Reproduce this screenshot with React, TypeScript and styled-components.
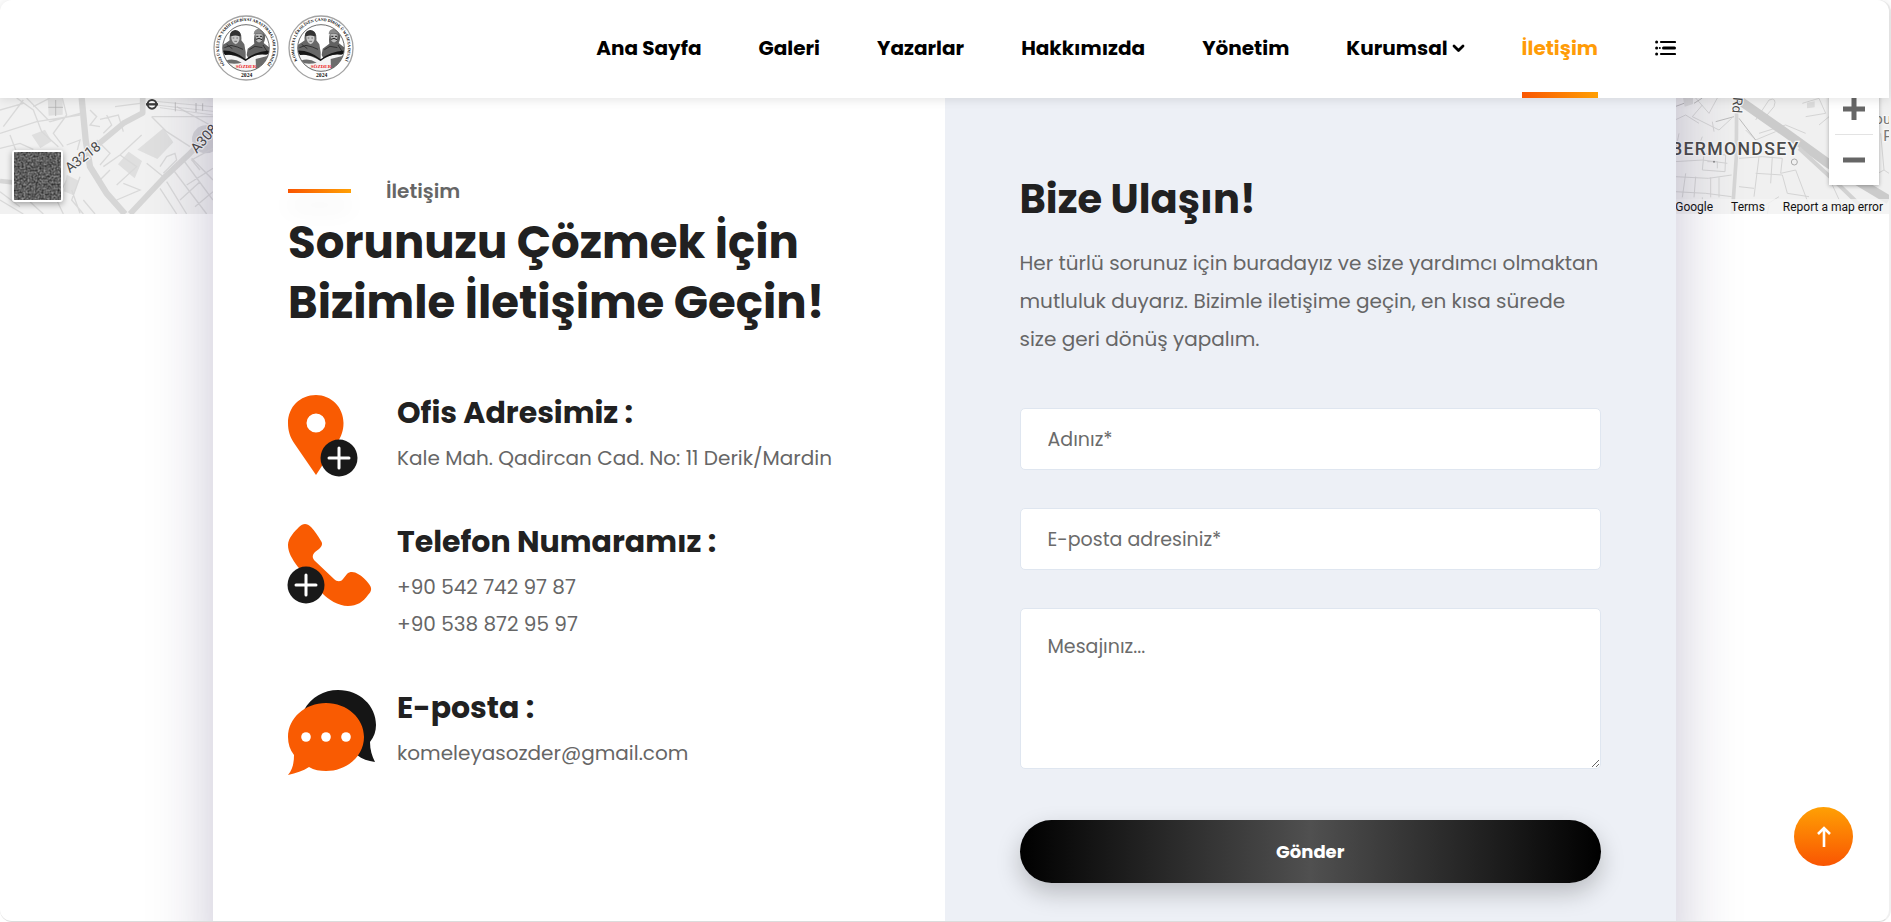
import React from "react";
import styled, { createGlobalStyle } from "styled-components";

const GlobalStyle = createGlobalStyle`
  *, *::before, *::after { box-sizing: border-box; }
  body {
    margin: 0;
    background: #fff;
    color: #666;
    font-family: Poppins, Inter, "Liberation Sans", sans-serif;
  }
  h1, h2, h3, p { margin: 0; }
  a { color: inherit; text-decoration: none; }
`;

const flame = "linear-gradient(90deg, #f95502, #ffa004)";

const Page = styled.div`
  display: flex;
  flex-direction: column;
  min-height: 100vh;
  border-right: 2px solid #f0f0f0;
  border-bottom: 1px solid #dcdcdc;
  border-radius: 12px;
`;

const Header = styled.header`
  position: sticky;
  top: 0;
  z-index: 10;
  background: #fff;
  border-radius: 12px 12px 0 0;
  box-shadow: 0 1px 12px rgba(0, 0, 0, 0.12);
`;

const HeaderInner = styled.div`
  display: flex;
  align-items: center;
  justify-content: space-between;
  width: 100%;
  max-width: 1463px;
  height: 98px;
  margin: 0 auto;
`;

const Logos = styled.a`
  display: flex;
  gap: 9px;
  margin-top: -3px;
`;

const Nav = styled.nav`
  display: flex;
  align-items: stretch;
  gap: 57px;
  height: 100%;
`;

const NavLink = styled.a<{ $active?: boolean }>`
  display: flex;
  align-items: center;
  gap: 4px;
  padding: 8px 0 4px;
  border-bottom: 6px solid transparent;
  border-image: ${(p) => (p.$active ? `${flame} 1` : "none")};
  color: ${(p) => (p.$active ? "#ff9c07" : "#000")};
  font-size: 20px;
  font-weight: 700;
  white-space: nowrap;
`;

const MenuButton = styled.button`
  display: flex;
  align-items: center;
  padding: 0 0 3px;
  border: 0;
  background: none;
  color: #000;
`;

const Stage = styled.main`
  display: grid;
  flex: 1;
  grid-template-columns: minmax(0, 1fr);
  overflow: hidden;
`;

const MapStrip = styled.section`
  position: relative;
  grid-area: 1 / 1;
  display: flex;
  justify-content: space-between;
  height: 116px;
  background: #f1f1f1;
`;

const Satellite = styled.button`
  position: absolute;
  left: 12px;
  bottom: 12px;
  width: 51px;
  height: 52px;
  padding: 0;
  overflow: hidden;
  border: 2px solid #fff;
  border-radius: 3px;
  background: #555;
  box-shadow: 0 2px 6px rgba(0, 0, 0, 0.35);
`;

const ZoomBox = styled.div`
  position: absolute;
  top: -15px;
  right: 10px;
  display: flex;
  flex-direction: column;
  width: 50px;
  padding: 0 6px;
  background: #fff;
  box-shadow: 0 1px 4px rgba(0, 0, 0, 0.3);
`;

const ZoomButton = styled.button`
  display: flex;
  align-items: center;
  justify-content: center;
  height: 51px;
  padding: 0;
  border: 0;
  background: none;
  & + & { border-top: 1px solid #e3e3e3; }
`;

const MapFooter = styled.div`
  position: absolute;
  right: 0;
  bottom: 0;
  display: flex;
  gap: 18px;
  padding: 1px 6px 0 8px;
  background: rgba(245, 245, 245, 0.75);
  color: #111;
  font-family: Roboto, sans-serif;
  font-size: 12px;
  line-height: 14px;
  white-space: nowrap;
`;

/* The card runs past the stage at both ends so its side shadow stays even. */
const Card = styled.div`
  z-index: 1;
  grid-area: 1 / 1;
  display: grid;
  grid-template-columns: 1fr 1fr;
  width: 100%;
  max-width: 1463px;
  margin: -60px auto;
  background: #fff;
  box-shadow: 0 0 60px rgba(35, 25, 85, 0.25);
`;

const InfoPane = styled.section`
  padding: 139px 75px 98px;
`;

const FormPane = styled.section`
  padding: 136px 75px 98px;
  background: #edf0f6;
`;

const Kicker = styled.p`
  display: flex;
  align-items: center;
  gap: 35px;
  margin-bottom: 8px;
  font-size: 20px;
  font-weight: 600;
  line-height: 28px;
  &::before {
    content: "";
    width: 63px;
    height: 4px;
    background: ${flame};
    box-shadow: 0 14px 24px rgba(0, 0, 0, 0.12);
  }
`;

const Title = styled.h1`
  color: #212121;
  font-size: 45px;
  font-weight: 700;
  line-height: 60px;
`;

const ContactList = styled.div`
  display: flex;
  flex-direction: column;
  gap: 47px;
  margin-top: 62px;
`;

const Contact = styled.div`
  display: grid;
  grid-template-columns: 88px 1fr;
  column-gap: 21px;
  align-items: start;
`;

const IconSlot = styled.div`
  height: 82px;
  svg { display: block; overflow: visible; }
`;

const ContactTitle = styled.h3`
  margin-bottom: 9px;
  color: #212121;
  font-size: 30px;
  font-weight: 700;
  line-height: 36px;
`;

const ContactText = styled.p`
  font-size: 20px;
  line-height: 37px;
`;

const FormTitle = styled.h2`
  margin-bottom: 20px;
  color: #212121;
  font-size: 40px;
  font-weight: 700;
  line-height: 50px;
`;

const Lead = styled.p`
  margin-bottom: 50px;
  font-size: 20px;
  line-height: 38px;
`;

const Form = styled.form`
  display: flex;
  flex-direction: column;
  gap: 38px;
`;

const Field = styled.label`
  display: block;
`;

const HiddenText = styled.span`
  position: absolute;
  width: 1px;
  height: 1px;
  overflow: hidden;
  clip-path: inset(50%);
`;

const Input = styled.input`
  display: block;
  width: 100%;
  height: 62px;
  padding: 0 27px;
  border: 1px solid #dfe6f0;
  border-radius: 5px;
  background: #fff;
  font: inherit;
  font-size: 19px;
  &::placeholder { color: #6b6b6b; opacity: 1; }
`;

const Message = styled.textarea`
  display: block;
  width: 100%;
  height: 161px;
  padding: 24px 27px;
  border: 1px solid #dfe6f0;
  border-radius: 5px;
  background: #fff;
  font: inherit;
  font-size: 19px;
  line-height: 27px;
  resize: vertical;
  &::placeholder { color: #6b6b6b; opacity: 1; }
`;

const Submit = styled.button`
  height: 63px;
  margin-top: 13px;
  border: 0;
  border-radius: 32px;
  background: linear-gradient(90deg, #000, #505050 50%, #000);
  box-shadow: 0 10px 24px rgba(0, 0, 0, 0.22);
  color: #fff;
  font: inherit;
  font-size: 18px;
  font-weight: 700;
`;

const ToTop = styled.a`
  position: fixed;
  right: 38px;
  bottom: 56px;
  z-index: 20;
  display: flex;
  align-items: center;
  justify-content: center;
  width: 59px;
  height: 59px;
  border-radius: 50%;
  background: linear-gradient(180deg, #ffa004, #f95502);
`;

function Seal({ id, motto }: { id: string; motto: string }) {
  return (
    <svg width="66" height="66" viewBox="0 0 198 198" role="img" aria-label="SÖZDER">
      <defs>
        <path id={id} d="M45 159 A81 81 0 1 1 153 159" />
        <clipPath id={`${id}-clip`}><circle cx="99" cy="99" r="69" /></clipPath>
      </defs>
      <circle cx="99" cy="99" r="96" fill="#fff" stroke="#a2a2a2" strokeWidth="4" />
      <text fontFamily="Liberation Serif, serif" fontWeight="700" fontSize="12" fill="#000">
        <textPath href={`#${id}`} startOffset="50%" textAnchor="middle">{motto}</textPath>
      </text>
      <g clipPath={`url(#${id}-clip)`}>
        <path d="M26 172 V92 L42 82 50 76 Q46 52 66 46 Q88 47 85 76 L94 88 98 112 98 150 60 172Z" fill="#686868" />
        <path d="M51 64 Q50 47 67 45 Q84 47 83 64 Z" fill="#333" />
        <path d="M55 64 Q67 59 79 64 Q82 82 68 88 Q54 82 55 64Z" fill="#c9c9c9" />
        <path d="M59 69h5M70 69h5M64 79h8" stroke="#444" strokeWidth="2" />
        <path d="M101 120 L104 101 124 86 Q121 68 127 52 Q140 37 158 52 Q157 76 152 84 L174 102 172 170 128 174Z" fill="#616161" />
        <path d="M122 58 Q122 42 139 41 Q156 43 154 58 Q138 52 122 58Z" fill="#8a8a8a" />
        <path d="M127 58 Q138 54 149 59 L147 76 Q139 88 130 77Z" fill="#b8b8b8" />
        <path d="M129 73 Q138 67 147 74 M130 64h6M141 64h6" fill="none" stroke="#222" strokeWidth="3" />
        <path d="M34 98 54 91 73 96 90 103M41 88 58 101M109 104l17-10 22 4M150 90l14 22" stroke="#333" strokeWidth="3" fill="none" />
        <path d="M26 118 Q60 114 98 138 Q128 114 174 114 L160 170 40 174Z" fill="#f4f4f4" />
        <path d="M27 107 Q64 105 98 133 Q128 108 172 106 Q170 116 160 119 Q124 114 98 138 Q70 115 36 120Z" fill="#151515" />
        <path d="M38 137 Q62 128 86 143 Q68 148 49 145Z M128 132 L166 122 156 158 129 162Z" fill="#6c6c6c" />
      </g>
      <circle cx="99" cy="99" r="70" fill="none" stroke="#222" strokeWidth="2" />
      <text x="99" y="158" textAnchor="middle" fontFamily="Liberation Serif, serif" fontWeight="700" fontSize="15" fill="#ed1c24">SÖZDER</text>
      <text x="101" y="185" textAnchor="middle" fontFamily="Liberation Serif, serif" fontWeight="700" fontSize="17" fill="#111">2024</text>
    </svg>
  );
}

function WestMap() {
  return (
    <svg width="213" height="116" viewBox="0 294 639 348" aria-hidden="true">
      <rect y="294" width="639" height="348" fill="#f1f1f1" />
      <g fill="#dfdfdf">
        <path d="M143 294h45v50l-42 3zM490 385l30 42-48 50-60-28zM386 455l40 28-22 52-50-42zM200 524l36 18-15 44-30-12zM95 405l40-16 20 35-34 20z" />
        <circle cx="618" cy="418" r="42" fill="#d5d5d8" />
      </g>
      <g fill="none" stroke="#d9d9d9" strokeWidth="4">
        <path d="M50 294 100 330 125 395 175 440M80 294 150 365 240 340M0 400 110 365 240 345M0 445 60 430 100 448M0 330 70 310M187 294 200 345 160 400 190 440M30 405 55 470M200 435 240 420 232 450M270 330 290 350 270 375 300 380M320 345 335 375 310 400M300 358 355 345 370 395M345 320 420 310M290 420 330 460 300 495M310 500 360 465 425 405M360 465 410 500 350 555M330 510 300 540M370 550 420 570 350 600M455 350 500 395 570 440M480 500 500 470 525 460 530 480 490 520M455 350 639 350M530 320 639 380M440 490 490 530M200 540 170 600 190 642M215 570 240 640M240 530 215 600 250 642M0 600 70 642M90 605 130 642M0 575 60 620M250 600 285 642M550 480 639 600M520 510 620 642M575 475 639 540M560 555 639 505M540 600 600 545M585 620 639 575M500 545 560 642M600 510 575 480 639 445M480 565 530 642M70 300 10 380M150 294 100 320" />
        <path d="M440 312 639 334M455 303 639 320M480 323 639 345" stroke="#cfcfcf" strokeWidth="2" />
        <path d="M526 307v27M588 309v27M608 310v22M145 322h44M167 300v48" stroke="#aaa" strokeWidth="2" />
      </g>
      <g fill="none" stroke="#d6d6d6" strokeLinejoin="round">
        <path d="M245 294 257 420 270 500 320 580 375 642" strokeWidth="19" />
        <path d="M428 294v45L370 370 250 470 205 505" strokeWidth="17" />
        <path d="M390 642 490 535 570 460 639 390" strokeWidth="17" />
        <path d="M0 543 45 548" strokeWidth="14" />
      </g>
      <circle cx="456" cy="313" r="13" fill="#fff" stroke="#3c3c3c" strokeWidth="6" />
      <path d="M438 313h36" stroke="#3c3c3c" strokeWidth="7" />
      <g fill="#484848" stroke="#f5f5f5" strokeWidth="7" paintOrder="stroke" fontFamily="Roboto, sans-serif" fontSize="42">
        <text transform="translate(209 520) rotate(-38)">A3218</text>
        <text transform="translate(590 462) rotate(-48)">A308</text>
      </g>
    </svg>
  );
}

function EastMap() {
  return (
    <svg width="214" height="116" viewBox="108 24 642 348" aria-hidden="true">
      <rect x="108" y="24" width="642" height="348" fill="#f0f0f0" />
      <path d="M132 24h30v18l-25 8zM504 38l23-4v18l-23 3z" fill="#dcdcdc" />
      <g fill="none" stroke="#d4d4d4" strokeWidth="3">
        <path d="M170 24 210 70 235 24M190 45 160 80 240 120 278 85M220 95 225 125M108 90 140 75 180 100M108 215 190 210 265 220M120 130 108 190M190 140 180 165M195 190 260 195 258 245 190 240 195 190M205 215h30v20M108 260l100 5 70-10M140 250 130 322M170 260 165 322M108 305 200 310 278 320M215 262v60M240 262v60M190 322v50M340 55 380 80 405 50Q415 20 390 30L350 90M360 130 440 105 500 130M320 120 350 150 410 125M300 205 370 200 430 205M360 200 345 320M400 200 395 280M430 205 425 250 470 240M350 250 430 255M430 255 445 310 510 320M300 290 345 295M470 240 520 372M500 180 560 230M490 40 540 25 560 70 500 80M540 105 570 80M300 340 380 345 420 320M390 345 385 372M580 285 610 350M725 130 735 240 680 270M735 240 750 250" />
        <path d="M108 50 135 40M165 40 190 24M230 95 285 80M300 85 350 150" stroke="#bdbdbd" />
      </g>
      <path d="M293 24 292 200 280 372" fill="none" stroke="#d6d6d6" strokeWidth="11" />
      <path d="M300 30 440 128 570 222 750 330" fill="none" stroke="#cbcbcb" strokeWidth="27" />
      <path d="M480 175 600 285 690 372" fill="none" stroke="#d2d2d2" strokeWidth="12" />
      <circle cx="466" cy="216" r="9" fill="none" stroke="#aaa" strokeWidth="3" />
      <circle cx="225" cy="215" r="3" fill="#888" />
      <g fill="#4b4b4b" stroke="#f7f7f7" strokeWidth="7" paintOrder="stroke" fontFamily="Roboto, sans-serif">
        <text x="96" y="194" fontSize="53" fontWeight="500" letterSpacing="4">BERMONDSEY</text>
        <text transform="translate(283 21) rotate(94)" fontSize="40">Rd</text>
        <text x="706" y="101" fontSize="45" fill="#777">ou</text>
        <text x="733" y="152" fontSize="45" fill="#777">P</text>
      </g>
    </svg>
  );
}

function SatelliteTexture() {
  return (
    <svg width="47" height="48" aria-hidden="true">
      <filter id="aerial" colorInterpolationFilters="sRGB">
        <feTurbulence type="fractalNoise" baseFrequency="0.5" numOctaves="3" seed="8" />
        <feColorMatrix values="0.6 0 0 0 0.07  0.6 0 0 0 0.07  0.6 0 0 0 0.07  0 0 0 0 1" />
      </filter>
      <rect width="47" height="48" filter="url(#aerial)" />
      <path d="M1 29 14 24M6 18 40 12M20 47 25 20" stroke="#333" opacity=".5" />
    </svg>
  );
}

function PlusBadge({ cx, cy }: { cx: number; cy: number }) {
  return (
    <g>
      <circle cx={cx} cy={cy} r="18.5" fill="#191919" />
      <path d={`M${cx - 10} ${cy}h20M${cx} ${cy - 10}v20`} stroke="#fff" strokeWidth="3" strokeLinecap="round" />
    </g>
  );
}

const PinIcon = () => (
  <svg width="70" height="82" aria-hidden="true">
    <path fill="#f95b02" fillRule="evenodd" d="M28 0C43 0 55.5 12 55.5 28 55.5 36 53 42 49 48L28 80 6 48C2 42 0 36 0 28 0 12 12 0 28 0ZM28 18.5a9.5 9.5 0 1 0 0 19 9.5 9.5 0 0 0 0-19Z" />
    <PlusBadge cx={51} cy={63} />
  </svg>
);

const PhoneIcon = () => (
  <svg width="84" height="82" aria-hidden="true">
    <path fill="#f95b02" d="M11 3C15-1 19-1 23 3 27 7 30 12 33 17 35 20 34 22 31 25L27 28C24 31 24 34 27 37L46 55C49 58 53 58 55 55L59 50C62 47 67 48 70 50 74 52 78 56 81 60 84 64 84 67 80 71 75 78 69 82 60 82 50 82 40 75 35 70L10 43C4 35 0 28 0 21 0 14 7 7 11 3Z" />
    <PlusBadge cx={18} cy={61} />
  </svg>
);

const ChatIcon = () => (
  <svg width="88" height="85" aria-hidden="true">
    <path fill="#151515" d="M16 20C23 7 36 0 50 0 72 0 88 16 88 35 88 41 86 47 82 52 82 60 84 66 87 72 80 71 74 69 69 65Z" />
    <path fill="#f95b02" d="M38 13C59 13 76 28 76 47 76 66 59 81 38 81 32 81 26 80 21 77 15 81 8 83 0 85 5 79 6 72 6 65 2 60 0 54 0 47 0 28 17 13 38 13Z" />
    <g fill="#fff"><circle cx="18" cy="47" r="4.8" /><circle cx="38" cy="47" r="4.8" /><circle cx="58" cy="47" r="4.8" /></g>
  </svg>
);

const navItems = [
  { label: "Ana Sayfa" },
  { label: "Galeri" },
  { label: "Yazarlar" },
  { label: "Hakkımızda" },
  { label: "Yönetim" },
  { label: "Kurumsal", menu: true },
  { label: "İletişim", active: true },
];

const contacts = [
  { title: "Ofis Adresimiz :", lines: ["Kale Mah. Qadircan Cad. No: 11 Derik/Mardin"], icon: <PinIcon /> },
  { title: "Telefon Numaramız :", lines: ["+90 542 742 97 87", "+90 538 872 95 97"], icon: <PhoneIcon /> },
  { title: "E-posta :", lines: ["komeleyasozder@gmail.com"], icon: <ChatIcon /> },
];

export default function App() {
  return (
    <Page>
      <GlobalStyle />
      <Header>
        <HeaderInner>
          <Logos href="#" aria-label="Ana Sayfa">
            <Seal id="seal-tr" motto="SÖZLÜ KÜLTÜR TARİH EDEBİYAT ARAŞTIRMALARI DERNEĞİ" />
            <Seal id="seal-ku" motto="KOMELEYA LÊKOLÎNÊN ÇAND DÎROK Û WÊJEYA DEVKÎ" />
          </Logos>
          <Nav>
            {navItems.map((item) => (
              <NavLink key={item.label} href="#" $active={item.active}>
                {item.label}
                {item.menu && (
                  <svg width="13" height="9" viewBox="0 0 13 9" aria-hidden="true">
                    <path d="M2 2l4.5 4.5L11 2" fill="none" stroke="currentColor" strokeWidth="2.8" strokeLinecap="round" strokeLinejoin="round" />
                  </svg>
                )}
              </NavLink>
            ))}
            <MenuButton type="button" aria-label="Menü">
              <svg width="21" height="16" viewBox="0 0 21 16" aria-hidden="true">
                <g fill="currentColor">
                  <circle cx="1.6" cy="2" r="1.5" /><circle cx="1.6" cy="8" r="1.5" /><circle cx="1.6" cy="14" r="1.5" />
                  <circle cx="4.8" cy="8" r="1" />
                </g>
                <path d="M6 2h14M6 14h14" stroke="currentColor" strokeWidth="2.2" strokeLinecap="round" />
                <path d="M8.5 8h11" stroke="currentColor" strokeWidth="3" strokeLinecap="round" />
              </svg>
            </MenuButton>
          </Nav>
        </HeaderInner>
      </Header>
      <Stage>
        <MapStrip aria-label="Harita">
          <WestMap />
          <EastMap />
          <Satellite type="button" aria-label="Uydu görünümü"><SatelliteTexture /></Satellite>
          <MapFooter>
            <span>Google</span>
            <a href="#">Terms</a>
            <a href="#">Report a map error</a>
          </MapFooter>
          <ZoomBox>
            <ZoomButton type="button" aria-label="Yakınlaştır">
              <svg width="22" height="22"><path d="M0 11h22M11 0v22" stroke="#666" strokeWidth="5" /></svg>
            </ZoomButton>
            <ZoomButton type="button" aria-label="Uzaklaştır">
              <svg width="22" height="22"><path d="M0 11h22" stroke="#666" strokeWidth="5" /></svg>
            </ZoomButton>
          </ZoomBox>
        </MapStrip>
        <Card>
          <InfoPane>
            <Kicker>İletişim</Kicker>
            <Title>Sorunuzu Çözmek İçin<br />Bizimle İletişime Geçin!</Title>
            <ContactList>
              {contacts.map((c) => (
                <Contact key={c.title}>
                  <IconSlot>{c.icon}</IconSlot>
                  <div>
                    <ContactTitle>{c.title}</ContactTitle>
                    {c.lines.map((line) => <ContactText key={line}>{line}</ContactText>)}
                  </div>
                </Contact>
              ))}
            </ContactList>
          </InfoPane>
          <FormPane>
            <FormTitle>Bize Ulaşın!</FormTitle>
            <Lead>
              Her türlü sorunuz için buradayız ve size yardımcı olmaktan
              mutluluk duyarız. Bizimle iletişime geçin, en kısa sürede
              size geri dönüş yapalım.
            </Lead>
            <Form onSubmit={(e) => e.preventDefault()}>
              <Field><HiddenText>Adınız</HiddenText><Input type="text" placeholder="Adınız*" /></Field>
              <Field><HiddenText>E-posta adresiniz</HiddenText><Input type="email" placeholder="E-posta adresiniz*" /></Field>
              <Field><HiddenText>Mesajınız</HiddenText><Message placeholder="Mesajınız..." /></Field>
              <Submit type="submit">Gönder</Submit>
            </Form>
          </FormPane>
        </Card>
      </Stage>
      <ToTop href="#" aria-label="Yukarı çık">
        <svg width="16" height="22" viewBox="0 0 16 22" aria-hidden="true">
          <path d="M8 21V2M2 8l6-6 6 6" fill="none" stroke="#fff" strokeWidth="2.6" />
        </svg>
      </ToTop>
    </Page>
  );
}
